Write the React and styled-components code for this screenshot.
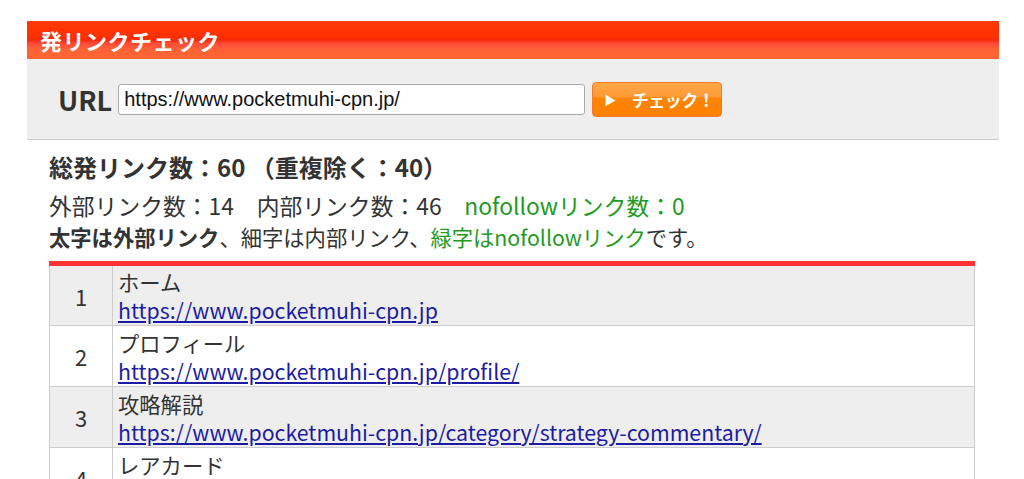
import React from 'react';
import styled, { createGlobalStyle } from 'styled-components';

const GlobalStyle = createGlobalStyle`
  html, body {
    margin: 0;
    padding: 0;
    background: #fff;
  }
  body {
    font-family: 'Noto Sans CJK JP', 'Noto Sans', sans-serif;
    color: #333;
  }
`;

const links = [
  { no: 1, title: 'ホーム', url: 'https://www.pocketmuhi-cpn.jp' },
  { no: 2, title: 'プロフィール', url: 'https://www.pocketmuhi-cpn.jp/profile/' },
  { no: 3, title: '攻略解説', url: 'https://www.pocketmuhi-cpn.jp/category/strategy-commentary/' },
  { no: 4, title: 'レアカード', url: 'https://www.pocketmuhi-cpn.jp/category/rare-card/' },
];

export default function App() {
  return (
    <>
      <GlobalStyle />
      <Page>
        <TitleBar>発リンクチェック</TitleBar>
        <SearchPanel>
          <UrlLabel>URL</UrlLabel>
          <UrlInput defaultValue="https://www.pocketmuhi-cpn.jp/" />
          <CheckButton type="button">
            <span className="arrow">▶</span>
            チェック！
          </CheckButton>
        </SearchPanel>
        <Result>
          <Total>総発リンク数：60 （重複除く：40）</Total>
          <Counts>
            外部リンク数：14　内部リンク数：46　<Green>nofollowリンク数：0</Green>
          </Counts>
          <Legend>
            <b>太字は外部リンク</b>、細字は内部リンク、<Green>緑字はnofollowリンク</Green>です。
          </Legend>
          <LinkTable>
            <tbody>
              {links.map((l, i) => (
                <Row key={l.no} $striped={i % 2 === 0}>
                  <NoCell>{l.no}</NoCell>
                  <LinkCell>
                    <div>{l.title}</div>
                    <a href={l.url}>{l.url}</a>
                  </LinkCell>
                </Row>
              ))}
            </tbody>
          </LinkTable>
        </Result>
      </Page>
    </>
  );
}

const Green = styled.span`
  color: #1f9a1f;
`;

const Page = styled.div`
  width: 972px;
  margin: 21px 0 0 27px;
`;

const TitleBar = styled.h1`
  margin: 0;
  height: 38px;
  padding: 0 13px;
  display: flex;
  align-items: center;
  font-size: 22px;
  font-weight: bold;
  color: #fff;
  letter-spacing: 0.5px;
  background: linear-gradient(
    to bottom,
    #ff3a08 0%,
    #ff3000 40%,
    #f8290c 50%,
    #ff4d3a 60%,
    #ff6236 75%,
    #ff6633 100%
  );
`;

const SearchPanel = styled.div`
  height: 80px;
  background: #eee;
  border-bottom: 1px solid #ccc;
  display: flex;
  align-items: center;
  padding-left: 31px;
`;

const UrlLabel = styled.span`
  font-size: 27px;
  font-weight: bold;
  color: #333;
  margin-right: 6px;
`;

const UrlInput = styled.input`
  box-sizing: border-box;
  width: 467px;
  height: 31px;
  padding: 0 5px;
  border: 1px solid #a9a9a9;
  border-radius: 3px;
  font-family: 'Liberation Sans', Arial, sans-serif;
  font-size: 20px;
  color: #111;
  background: #fff;
`;

const CheckButton = styled.button`
  box-sizing: border-box;
  margin-left: 7px;
  width: 130px;
  height: 35px;
  border: 1px solid #f77a2a;
  border-radius: 4px;
  background: linear-gradient(to bottom, #ffa848 0%, #ff9a36 42%, #ff8500 46%, #ff8000 100%);
  color: #fff;
  font-family: 'Noto Sans CJK JP', sans-serif;
  font-size: 17px;
  font-weight: bold;
  white-space: nowrap;
  letter-spacing: -0.5px;
  display: flex;
  align-items: center;
  padding: 0 0 0 11px;
  cursor: pointer;

  .arrow {
    font-size: 12px;
    margin-right: 16px;
  }
`;

const Result = styled.div`
  padding: 11px 24px 0 22px;
`;

const Total = styled.div`
  font-size: 24px;
  font-weight: bold;
  line-height: 32px;
`;

const Counts = styled.div`
  margin-top: 8px;
  font-size: 22.8px;
  line-height: 30px;
`;

const Legend = styled.div`
  font-size: 21.3px;
  line-height: 31px;
`;

const LinkTable = styled.table`
  margin-top: 9px;
  width: 100%;
  border-collapse: collapse;
  border-top: 5px solid #ff3333;
  font-size: 21.3px;
`;

const Row = styled.tr`
  background: ${(p) => (p.$striped ? '#eee' : '#fff')};
`;

const NoCell = styled.td`
  box-sizing: border-box;
  width: 63px;
  height: 61px;
  border: 1px solid #ccc;
  border-top: none;
  text-align: center;
  font-size: 22px;
  padding: 0;
`;

const LinkCell = styled.td`
  border: 1px solid #ccc;
  border-top: none;
  padding: 2px 5px 1px;
  line-height: 28px;

  a {
    color: #1c1ca3;
    text-decoration: underline;
  }
`;
